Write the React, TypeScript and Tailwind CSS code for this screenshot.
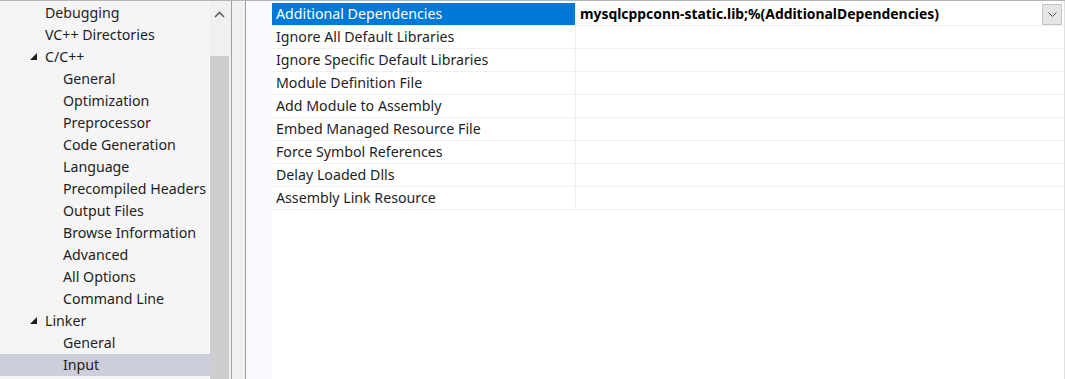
import React from "react";

const tree: { label: string; level: number; expanded?: boolean; selected?: boolean }[] = [
  { label: "Debugging", level: 1 },
  { label: "VC++ Directories", level: 1 },
  { label: "C/C++", level: 1, expanded: true },
  { label: "General", level: 2 },
  { label: "Optimization", level: 2 },
  { label: "Preprocessor", level: 2 },
  { label: "Code Generation", level: 2 },
  { label: "Language", level: 2 },
  { label: "Precompiled Headers", level: 2 },
  { label: "Output Files", level: 2 },
  { label: "Browse Information", level: 2 },
  { label: "Advanced", level: 2 },
  { label: "All Options", level: 2 },
  { label: "Command Line", level: 2 },
  { label: "Linker", level: 1, expanded: true },
  { label: "General", level: 2 },
  { label: "Input", level: 2, selected: true },
];

const props = [
  "Additional Dependencies",
  "Ignore All Default Libraries",
  "Ignore Specific Default Libraries",
  "Module Definition File",
  "Add Module to Assembly",
  "Embed Managed Resource File",
  "Force Symbol References",
  "Delay Loaded Dlls",
  "Assembly Link Resource",
];

const Expander = () => (
  <svg width="7" height="7" viewBox="0 0 7 7" className="shrink-0">
    <polygon points="7,0 7,7 0,7" fill="#1e1e1e" />
  </svg>
);

export default function App() {
  return (
    <div
      className="w-[1065px] h-[379px] flex overflow-hidden border-t border-[#b4b4b4] bg-[#f0f0f0] text-[14.2px] text-[#1e1e1e]"
      style={{ fontFamily: '"Segoe UI", "Noto Sans", "Open Sans", sans-serif' }}
    >
      {/* tree */}
      <div className="w-[210px] bg-[#f5f5f5] pt-[1px] overflow-hidden">
        {tree.map((item, i) => (
          <div
            key={i}
            className={`h-[22px] flex items-center whitespace-nowrap ${item.selected ? "bg-[#cccedb]" : ""}`}
          >
            {item.level === 1 ? (
              <div className="flex items-center pl-[30px]">
                <div className="w-[15px] flex items-center">{item.expanded && <Expander />}</div>
                <span>{item.label}</span>
              </div>
            ) : (
              <span className="pl-[63px]">{item.label}</span>
            )}
          </div>
        ))}
      </div>

      {/* scrollbar */}
      <div className="w-[21px] flex flex-col bg-[#f0f0f0]">
        <div className="h-[27px] flex items-center justify-center pr-[2px]">
          <svg width="11" height="7" viewBox="0 0 11 7">
            <path d="M1 6 L5.5 1.5 L10 6" stroke="#606060" strokeWidth="1.6" fill="none" />
          </svg>
        </div>
        <div className="h-[28px]" />
        <div className="flex-1 w-[19px] bg-[#cdcdcd]" />
      </div>

      <div className="w-px bg-[#a0a0a0]" />
      <div className="w-[13px] bg-[#f0f0f0]" />
      <div className="w-px bg-[#a0a0a0]" />

      {/* property grid */}
      <div className="flex-1 bg-white flex">
        <div className="w-[26px] bg-[#f7f9fc]" />
        <div className="flex-1 pt-[2px]">
          {props.map((p, i) => (
            <div key={p} className="h-[23px] flex border-b border-[#f0f0f0]">
              <div
                className={`w-[304px] pl-[4px] flex items-center border-r border-[#f0f0f0] ${i === 0 ? "bg-[#0078d7] text-white" : ""}`}
              >
                {p}
              </div>
              <div className="flex-1 flex items-center pl-[4px] pr-[2px]">
                {i === 0 && (
                  <>
                    <span className="flex-1 font-bold text-black text-[13.9px]">
                      mysqlcppconn-static.lib;%(AdditionalDependencies)
                    </span>
                    <div className="w-[20px] h-[21px] bg-[#e5e5e5] border border-[#c4c4c4] flex items-center justify-center">
                      <svg width="9" height="5" viewBox="0 0 9 5">
                        <path d="M0.5 0.5 L4.5 4.5 L8.5 0.5" stroke="#555" strokeWidth="1" fill="none" />
                      </svg>
                    </div>
                  </>
                )}
              </div>
            </div>
          ))}
        </div>
        <div className="w-px bg-[#e0e0e0]" />
      </div>
    </div>
  );
}
